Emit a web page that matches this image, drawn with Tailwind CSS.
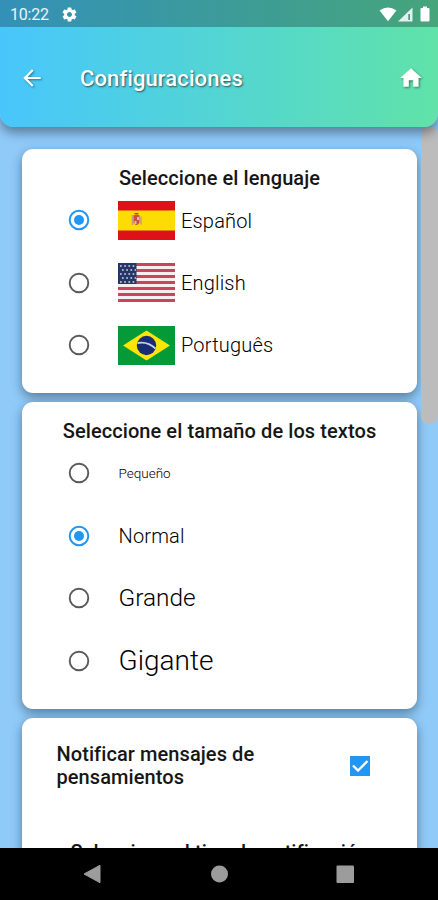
<!DOCTYPE html>
<html lang="es">
<head>
<meta charset="utf-8">
<title>Configuraciones</title>
<script src="https://cdn.jsdelivr.net/npm/@tailwindcss/browser@4"></script>
</head>
<body class="w-[438px] h-[900px] overflow-hidden font-['Roboto',sans-serif] text-[#161616]">
<div class="relative flex flex-col w-[438px] h-[900px] overflow-hidden bg-[#90caf9]">

  <header class="relative z-20 shrink-0 h-[127px] rounded-b-[14px] bg-linear-to-r from-[#48c6fc] via-[#53d5d3] to-[#60e2a8] shadow-[0_6px_11px_rgba(0,0,0,0.38)] text-white">
    <div class="flex items-center h-[27px] bg-black/27 pl-[10px] pr-[8px]">
      <span class="text-[16px] leading-[27px] tracking-[-0.2px] pt-[2px] text-white/90">10:22</span>
      <svg class="ml-[12px] mt-[1px] size-[17px]" viewBox="0 0 24 24" fill="#fff"><path d="M19.43 12.98c.04-.32.07-.64.07-.98s-.03-.66-.07-.98l2.11-1.65c.19-.15.24-.42.12-.64l-2-3.46c-.12-.22-.39-.3-.61-.22l-2.49 1c-.52-.4-1.08-.73-1.69-.98l-.38-2.65A.49.49 0 0 0 14 2h-4c-.25 0-.46.18-.49.42l-.38 2.65c-.61.25-1.17.59-1.69.98l-2.49-1c-.23-.09-.49 0-.61.22l-2 3.46c-.13.22-.07.49.12.64l2.11 1.65c-.04.32-.07.65-.07.98s.03.66.07.98l-2.11 1.65c-.19.15-.24.42-.12.64l2 3.46c.12.22.39.3.61.22l2.49-1c.52.4 1.08.73 1.69.98l.38 2.65c.03.24.24.42.49.42h4c.25 0 .46-.18.49-.42l.38-2.65c.61-.25 1.17-.59 1.69-.98l2.49 1c.23.09.49 0 .61-.22l2-3.46c.12-.22.07-.49-.12-.64l-2.11-1.65zM12 15.5c-1.93 0-3.5-1.57-3.5-3.5s1.57-3.5 3.5-3.5 3.5 1.57 3.5 3.5-1.57 3.5-3.5 3.5z"/></svg>
      <div class="ml-auto flex items-center mt-[1px]">
        <svg class="w-[18px] h-[15px]" viewBox="0 0 18 15" fill="#fff"><path d="M.6 3.4Q9-2.6 17.400 3.400L9 14.200z"/></svg>
        <svg class="w-[15px] h-[15px] ml-[1px]" viewBox="0 0 15 15"><path d="M0 14.500L14.500 0.500V14.500z" fill="#fff" fill-opacity=".85"/><path d="M10.300 7h1.700v6h-1.700z" fill="#429b88"/></svg>
        <svg class="w-[10px] h-[16px] ml-[7px]" viewBox="0 0 10 16" fill="#fff"><path d="M3 .5h4v1.500h1.500a1 1 0 0 1 1 1V14.500a1 1 0 0 1-1 1h-7a1 1 0 0 1-1-1V3a1 1 0 0 1 1-1H3z"/></svg>
      </div>
    </div>
    <div class="flex items-center h-[100px] pl-[19px] pr-[14px]">
      <svg class="size-[26px] mt-[1px] drop-shadow-[1px_1px_1px_rgba(0,0,0,0.45)]" viewBox="0 0 24 24" fill="#fff"><path d="M20 11H7.830l5.590-5.590L12 4l-8 8 8 8 1.410-1.410L7.830 13H20v-2z"/></svg>
      <h1 class="ml-[35px] text-[22px] font-medium leading-[28px] tracking-[0.1px] pt-[3px] [text-shadow:1px_1px_2px_rgba(0,0,0,0.6)]">Configuraciones</h1>
      <svg class="ml-auto mt-[1px] size-[26px] drop-shadow-[1px_1px_1px_rgba(0,0,0,0.45)]" viewBox="0 0 24 24" fill="#fff"><path d="M10 20v-6h4v6h5v-8h3L12 3 2 12h3v8z"/></svg>
    </div>
  </header>

  <div class="absolute z-10 right-0 top-[127px] w-[17px] h-[297px] rounded-[8px] bg-[#bcbcbc]"></div>

  <main class="flex-1 min-h-0 overflow-hidden flex flex-col gap-[9px] pt-[22px] pl-[22px] pr-[21px]">
    <section class="shrink-0 h-[244px] rounded-[11px] bg-white pt-[17px] shadow-[0_4px_11px_rgba(0,0,0,0.4)]">
      <h2 class="text-center h-[23px] leading-[25px] text-[20px] tracking-[0.08px] font-medium">Seleccione el lenguaje</h2>
      <label class="flex items-center h-[62.500px] pl-[45.500px]">
        <svg class="size-[22px]" viewBox="0 0 22 22"><circle cx="11" cy="11" r="9.300" fill="none" stroke="#2196f3" stroke-width="2"/><circle cx="11" cy="11" r="5" fill="#2196f3"/></svg>
        <svg class="ml-[28.500px] w-[57px] h-[39px]" viewBox="0 0 57 39"><path fill="#dd1117" d="M0 0h57v39H0z"/><path fill="#fddc04" d="M0 9.500h57v20H0z"/><path d="M14.500 14v10M23 15.500v8" stroke="#c99b80" stroke-width="1.500"/><path d="M15.500 14.500q3-2.500 6 0v7q-3 5-6 0z" fill="#c5533b"/><path d="M19 16h2v3h-2zM16.500 20h2v3h-2z" fill="#eab9b4"/><path d="M16.500 12.500h4" stroke="#b8442f"/></svg>
        <span class="ml-[6px] pt-[1px] text-[20px] tracking-[0.18px] font-light text-black">Español</span>
      </label>
      <label class="flex items-center h-[62.500px] pl-[45.500px]">
        <svg class="size-[22px]" viewBox="0 0 22 22"><circle cx="11" cy="11" r="9.300" fill="none" stroke="#5a5a5a" stroke-width="1.900"/></svg>
        <svg class="ml-[28.500px] w-[57px] h-[39px]" viewBox="0 0 57 39"><path fill="#f8eef0" d="M0 0h57v39H0z"/><path d="M0 1.500h57M0 7.500h57M0 13.500h57M0 19.500h57M0 25.500h57M0 31.500h57M0 37.500h57" stroke="#c6465f" stroke-width="3"/><path fill="#253769" d="M0 0h18.500v21H0z"/><path d="M2 3h16M4 7h14M2 11h16M4 15h14M2 19h16" stroke="#d3d8e6" stroke-width="1.600" stroke-dasharray="1.700 2.500"/></svg>
        <span class="ml-[6px] text-[20px] tracking-[0.18px] font-light text-black">English</span>
      </label>
      <label class="flex items-center h-[62.500px] pl-[45.500px]">
        <svg class="size-[22px]" viewBox="0 0 22 22"><circle cx="11" cy="11" r="9.300" fill="none" stroke="#5a5a5a" stroke-width="1.900"/></svg>
        <svg class="ml-[28.500px] w-[57px] h-[39px]" viewBox="0 0 57 39"><path fill="#049a38" d="M0 0h57v39H0z"/><path fill="#fde505" d="M5 19.500L28.500 4.500 52 19.500 28.500 34.500z"/><circle cx="28.500" cy="19.500" r="9.700" fill="#192d75"/><path d="M19.500 17q10-2 18 5.500" fill="none" stroke="#c3d4e5" stroke-width="1.900"/></svg>
        <span class="ml-[6px] text-[20px] tracking-[0.18px] font-light text-black">Português</span>
      </label>
    </section>

    <section class="shrink-0 h-[307px] rounded-[11px] bg-white pt-[17px] shadow-[0_4px_11px_rgba(0,0,0,0.4)]">
      <h2 class="text-center h-[23px] leading-[25px] text-[20px] tracking-[0.08px] font-medium">Seleccione el tamaño de los textos</h2>
      <label class="flex items-center h-[62.500px] pl-[45.500px]">
        <svg class="size-[22px]" viewBox="0 0 22 22"><circle cx="11" cy="11" r="9.300" fill="none" stroke="#5a5a5a" stroke-width="1.900"/></svg>
        <span class="ml-[29px] text-[13.500px] font-light text-black">Pequeño</span>
      </label>
      <label class="flex items-center h-[62.500px] pl-[45.500px]">
        <svg class="size-[22px]" viewBox="0 0 22 22"><circle cx="11" cy="11" r="9.300" fill="none" stroke="#2196f3" stroke-width="2"/><circle cx="11" cy="11" r="5" fill="#2196f3"/></svg>
        <span class="ml-[29px] text-[20px] tracking-[0.18px] font-light text-black">Normal</span>
      </label>
      <label class="flex items-center h-[62.500px] pl-[45.500px]">
        <svg class="size-[22px]" viewBox="0 0 22 22"><circle cx="11" cy="11" r="9.300" fill="none" stroke="#5a5a5a" stroke-width="1.900"/></svg>
        <span class="ml-[29px] text-[24.400px] font-light text-black">Grande</span>
      </label>
      <label class="flex items-center h-[62.500px] pl-[45.500px]">
        <svg class="size-[22px]" viewBox="0 0 22 22"><circle cx="11" cy="11" r="9.300" fill="none" stroke="#5a5a5a" stroke-width="1.900"/></svg>
        <span class="ml-[29px] text-[28px] font-light text-black">Gigante</span>
      </label>
    </section>

    <section class="shrink-0 h-[240px] rounded-[11px] bg-white shadow-[0_4px_11px_rgba(0,0,0,0.4)]">
      <label class="flex items-center h-[96px] pl-[34.500px] pr-[47px]">
        <span class="w-[240px] text-[20px] leading-[23.500px] tracking-[0.08px] font-medium">Notificar mensajes de pensamientos</span>
        <svg class="ml-auto size-[20px]" viewBox="0 0 20 20"><path fill="#2196f3" d="M0 0h20v20H0z"/><path d="M3 9.500l5 5L17.500 5" fill="none" stroke="#fff" stroke-width="2.300"/></svg>
      </label>
      <h2 class="text-center mt-[27px] h-[23px] leading-[23px] text-[20px] tracking-[0.08px] font-medium">Seleccione el tipo de notificación</h2>
    </section>
  </main>

  <nav class="relative z-20 shrink-0 h-[52px] bg-black">
    <svg class="w-full h-[52px]" viewBox="0 0 438 52" fill="#9c9c9c"><path d="M84 26L100 17.300V34.700z" stroke="#9c9c9c" stroke-width="1" stroke-linejoin="round"/><circle cx="219.500" cy="26" r="8.500"/><rect x="336.500" y="17.500" width="17.500" height="17.500" rx="1"/></svg>
  </nav>
</div>
</body>
</html>
